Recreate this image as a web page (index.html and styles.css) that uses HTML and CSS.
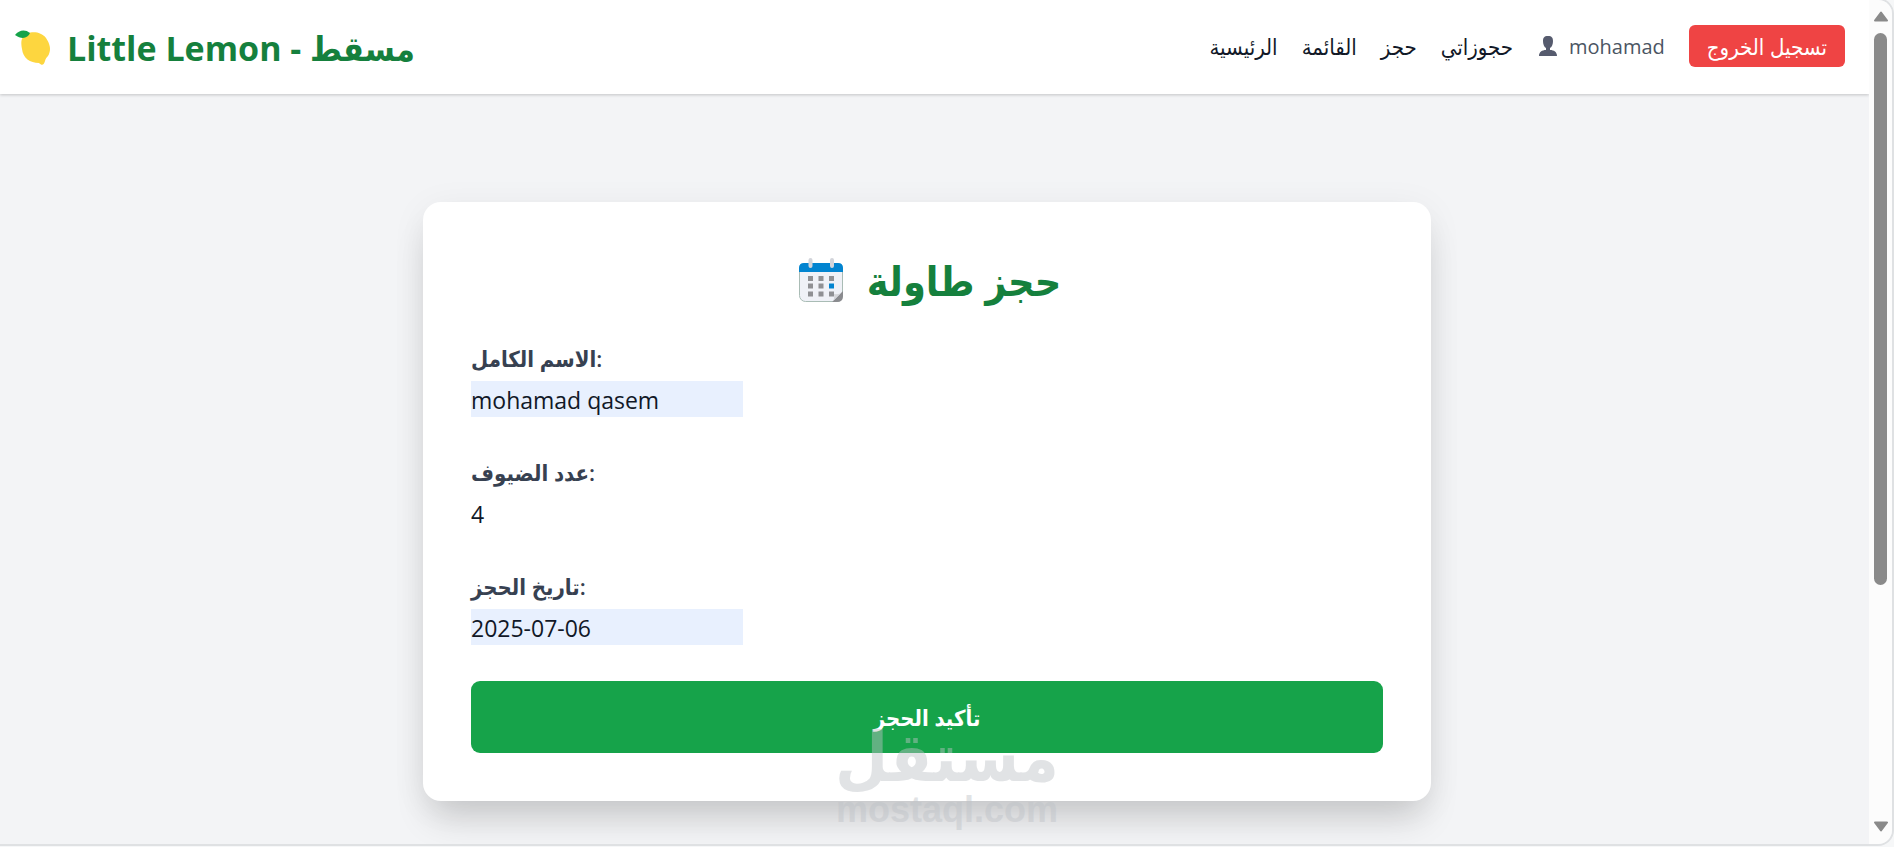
FILE: index.html
```html
<!DOCTYPE html>
<html lang="ar">
<head>
<meta charset="utf-8">
<title>Little Lemon - مسقط</title>
<link rel="stylesheet" href="styles.css">
</head>
<body>
<div class="window">
  <div class="page">
    <header class="navbar">
      <div class="brand">
        <svg class="brand-icon" viewBox="0 0 36 36" aria-hidden="true">
          <path d="M8 7C12 1 25 0 31 8c4 6 5 11 3 16-1 3-3 3-4 7-1 4-3 5-6 2-9 0-16-5-17-14C6 13 6 10 8 7Z" fill="#fdd63f"/>
          <path d="M0 5C4 0 10-1 15 3c-2 5-8 7-15 2Z" fill="#16a34a"/>
        </svg>
        <span>Little Lemon - مسقط</span>
      </div>
      <nav class="links">
        <a href="#home">الرئيسية</a>
        <a href="#menu">القائمة</a>
        <a href="#book">حجز</a>
        <a href="#mine">حجوزاتي</a>
        <span class="user">
          <svg class="user-icon" viewBox="0 0 18 20" aria-hidden="true">
            <path d="M9 0c4 0 5 2 5 5s-1 6-3 7v2c4 0 7 2 7 6H0c0-4 3-6 7-6v-2C5 11 4 8 4 5s1-5 5-5Z" fill="#565b6e"/>
          </svg>
          mohamad
        </span>
        <button class="logout" type="button">تسجيل الخروج</button>
      </nav>
    </header>
    <main class="content">
      <form class="card">
        <h1 class="title">
          <svg class="title-icon" viewBox="0 0 44 45" aria-hidden="true">
            <rect x=".5" y="5.500" width="43" height="38" rx="6" fill="#eff1f7" stroke="#a9bcb5"/>
            <path d="M0 14v-4q0-5 5-5h34q5 0 5 5v4Z" fill="#0284d0"/>
            <path d="M11.500 2v6M33 2v6" stroke="#d2d4da" stroke-width="4" stroke-linecap="round"/>
            <path d="M9 18h5v5H9zM19.500 18h5v5h-5zM30 18h5v5h-5zM9 25.500h5v5H9zM19.500 25.500h5v5h-5zM9 33.500h5v5H9zM19.500 33.500h5v5h-5zM30 33.500h5v5h-5z" fill="#8f9094"/>
            <path d="M30 25.500h5v5h-5z" fill="#0284d0"/>
            <path d="M44 33v5q0 6-6 6h-5Z" fill="#8a8b8f"/>
            <path d="M33 44q3-3 2-8 6 1 9-3Z" fill="#d4d5d9"/>
          </svg>
          <span>حجز طاولة</span>
        </h1>
        <div class="field">
          <label for="name">الاسم الكامل:</label>
          <input class="filled" id="name" type="text" value="mohamad qasem">
        </div>
        <div class="field">
          <label for="guests">عدد الضيوف:</label>
          <input id="guests" type="text" inputmode="numeric" value="4">
        </div>
        <div class="field">
          <label for="date">تاريخ الحجز:</label>
          <input class="filled" id="date" type="text" value="2025-07-06">
        </div>
        <button class="confirm" type="submit">تأكيد الحجز</button>
      </form>
    </main>
  </div>
  <div class="scrollbar" aria-hidden="true">
    <svg class="arrow" viewBox="0 0 14 10"><path d="M7 1 13 9H1Z" fill="#8a8a8a" stroke="#8a8a8a" stroke-width="2" stroke-linejoin="round"/></svg>
    <div class="track"><div class="thumb"></div></div>
    <svg class="arrow" viewBox="0 0 14 10"><path d="M7 9 13 1H1Z" fill="#8a8a8a" stroke="#8a8a8a" stroke-width="2" stroke-linejoin="round"/></svg>
  </div>
</div>
<div class="watermark">
  <span class="watermark-name">مستقل</span>
  <span class="watermark-site">mostaql.com</span>
</div>
</body>
</html>
```
FILE: styles.css
```css
* { box-sizing: border-box; }

body {
  margin: 0;
  height: 100vh;
  padding: 0 2px 3px 0;
  overflow: hidden;
  background: #f6f7f8;
  font-family: "Open Sans", "DejaVu Sans Condensed", "DejaVu Sans", sans-serif;
  font-size: 22px;
  color: #111827;
}

.window {
  display: flex;
  height: 100%;
  overflow: hidden;
  border-radius: 0 14px 14px 0;
  box-shadow: 0 0 0 2px #dfe1e3;
  background: #f3f4f6;
}

.page { flex: 1; min-width: 0; overflow: hidden; }

.navbar {
  display: flex;
  align-items: center;
  justify-content: space-between;
  min-height: 94px;
  padding: 0 24px 2px 15px;
  background: #fff;
  box-shadow: 0 1px 3px rgba(0, 0, 0, 0.2);
}

.brand {
  display: flex;
  align-items: center;
  gap: 16px;
  padding-top: 4px;
  font-size: 34px;
  font-weight: 700;
  color: #15803d;
}

.brand-icon { width: 36px; height: 36px; overflow: visible; }

.links {
  display: flex;
  align-items: center;
  gap: 24px;
}

.links a { color: inherit; text-decoration: none; }

.user {
  display: flex;
  align-items: center;
  gap: 12px;
  margin-left: 2px;
  font-size: 20px;
  color: #4b5563;
}

.user-icon { width: 18px; height: 20px; }

.logout {
  height: 42px;
  padding: 0 18px;
  border: 0;
  border-radius: 6px;
  background: #ef4444;
  color: #fff;
  font: inherit;
}

.content { padding: 108px 15px 60px 0; }

.card {
  max-width: 1008px;
  margin: 0 auto;
  padding: 48px;
  border-radius: 18px;
  background: #fff;
  box-shadow: 0 24px 36px -8px rgba(0, 0, 0, 0.16), 0 6px 36px rgba(0, 0, 0, 0.06);
}

.title {
  display: flex;
  align-items: center;
  justify-content: center;
  gap: 24px;
  height: 60px;
  margin: 0 0 29px;
  padding-left: 6px;
  font-size: 41px;
  font-weight: 700;
  color: #15803d;
}

.title-icon { width: 44px; height: 45px; }

.field { margin-bottom: 36px; }

.field label {
  display: block;
  height: 42px;
  line-height: 38px;
  font-weight: 600;
  color: #374151;
}

.field input {
  display: block;
  width: 272px;
  height: 36px;
  padding: 2px 0 0;
  border: 0;
  background: transparent;
  color: #111827;
  font: inherit;
  font-size: 23px;
}

.field .filled { background: #e8f0fe; }

.confirm {
  display: block;
  width: 100%;
  height: 72px;
  border: 0;
  border-radius: 9px;
  background: #16a34a;
  color: #fff;
  font: inherit;
  font-weight: 600;
}

.scrollbar {
  display: flex;
  flex-direction: column;
  align-items: center;
  gap: 11px;
  width: 23px;
  padding: 11px 0 12px;
  background: #fcfcfc;
}

.arrow { width: 14px; height: 11px; }

.track { flex: 1; width: 13px; }

.thumb { height: 71%; border-radius: 7px; background: #8a8a8a; }

.watermark {
  position: absolute;
  left: 50%;
  bottom: 19px;
  display: flex;
  flex-direction: column;
  align-items: center;
  transform: translateX(-50%);
  font-weight: 700;
  line-height: 1;
  color: #bec2c7;
  opacity: 0.45;
  pointer-events: none;
}

.watermark-name { font-family: "DejaVu Sans Condensed", "DejaVu Sans", sans-serif; font-size: 68px; }

.watermark-site { font-family: "Liberation Sans", sans-serif; font-size: 36px; }
```
